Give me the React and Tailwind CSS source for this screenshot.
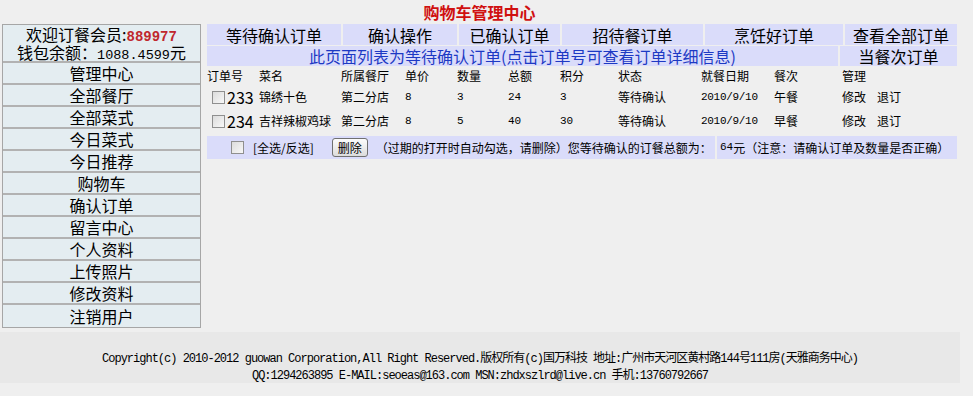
import React from 'react';

const navItems = [
  '管理中心', '全部餐厅', '全部菜式', '今日菜式', '今日推荐', '购物车',
  '确认订单', '留言中心', '个人资料', '上传照片', '修改资料', '注销用户',
];

const tabs = [
  { label: '等待确认订单', w: 'w-[134px]' },
  { label: '确认操作', w: 'w-[114px]' },
  { label: '已确认订单', w: 'w-[101px]' },
  { label: '招待餐订单', w: 'w-[141px]' },
  { label: '烹饪好订单', w: 'w-[138px]' },
  { label: '查看全部订单', w: 'flex-1' },
];

const orders = [
  { id: '233', name: '锦绣十色', shop: '第二分店', price: '8', qty: '3', total: '24', score: '3', meal: '午餐' },
  { id: '234', name: '吉祥辣椒鸡球', shop: '第二分店', price: '8', qty: '5', total: '40', score: '30', meal: '早餐' },
];

const Box = () => (
  <span className="inline-block shrink-0 w-[13px] h-[13px] border border-[#8f8f8f] bg-gradient-to-br from-[#dcdcdc] to-[#f8f8f8] align-middle" />
);

const cols = ['w-[52px]', 'w-[82px]', 'w-[64px]', 'w-[52px]', 'w-[51px]', 'w-[52px]', 'w-[58px]', 'w-[83px]', 'w-[73px]', 'w-[68px]'];

export default function App() {
  return (
    <div className="min-h-[396px] w-[973px] bg-[#efefef] font-['Noto_Sans_CJK_SC',sans-serif] text-black [text-spacing-trim:space-all]">
      <div className="w-[955px] ml-[2px]">
        <div className="h-[24px] flex items-center justify-center text-[16px] font-bold text-[#d01010]">
          购物车管理中心
        </div>
        <div className="flex gap-[6px]">
          {/* left menu */}
          <div className="w-[199px] border border-[#a6a6a6] bg-[#e4edf1]">
            <div className="h-[38px] border-b-2 border-[#b2b2b2] flex flex-col items-center justify-center text-[16px]">
              <div className="h-[18px] leading-[18px]">欢迎订餐会员:<span className="font-['Liberation_Mono',monospace] text-[14px] font-bold text-[#c0272d]">889977</span></div>
              <div className="h-[18px] leading-[18px]">钱包余额：<span className="font-['Liberation_Mono',monospace] text-[13.5px]">1088.4599</span>元</div>
            </div>
            {navItems.map((item, i) => (
              <div
                key={item}
                className={`h-[22px] flex items-center justify-center text-[16px] leading-none ${i < navItems.length - 1 ? 'border-b-2 border-[#b2b2b2]' : ''}`}
              >
                {item}
              </div>
            ))}
          </div>

          {/* right content */}
          <div className="w-[750px]">
            <div className="flex gap-[2px] h-[21px]">
              {tabs.map((t) => (
                <div key={t.label} className={`${t.w} bg-[#dadcfa] flex items-center justify-center text-[16px] leading-none`}>
                  {t.label}
                </div>
              ))}
            </div>
            <div className="flex gap-[2px] h-[20px] mt-[1px]">
              <div className="flex-1 bg-[#dadcfa] flex items-center justify-center text-[16px] leading-none text-[#1d39c4]">
                此页面列表为等待确认订单(点击订单号可查看订单详细信息)
              </div>
              <div className="w-[117px] bg-[#dadcfa] flex items-center justify-center text-[16px] leading-none">
                当餐次订单
              </div>
            </div>

            <div className="text-[12px]">
              <div className="flex h-[19px] items-center">
                {['订单号', '菜名', '所属餐厅', '单价', '数量', '总额', '积分', '状态', '就餐日期', '餐次', '管理'].map((h, i) => (
                  <div key={h} className={cols[i] ?? 'flex-1'}>{h}</div>
                ))}
              </div>
              {orders.map((o) => (
                <div key={o.id} className="flex h-[24px] items-center">
                  <div className={`${cols[0]} flex items-center pl-[5px] gap-[2px]`}>
                    <Box />
                    <span className="text-[16px] leading-none">{o.id}</span>
                  </div>
                  <div className={cols[1]}>{o.name}</div>
                  <div className={cols[2]}>{o.shop}</div>
                  <div className={`${cols[3]} font-['Liberation_Mono',monospace] text-[11px]`}>{o.price}</div>
                  <div className={`${cols[4]} font-['Liberation_Mono',monospace] text-[11px]`}>{o.qty}</div>
                  <div className={`${cols[5]} font-['Liberation_Mono',monospace] text-[11px]`}>{o.total}</div>
                  <div className={`${cols[6]} font-['Liberation_Mono',monospace] text-[11px]`}>{o.score}</div>
                  <div className={cols[7]}>等待确认</div>
                  <div className={`${cols[8]} font-['Liberation_Mono',monospace] text-[11px] tracking-[-0.3px]`}>2010/9/10</div>
                  <div className={cols[9]}>{o.meal}</div>
                  <div className="flex-1 flex gap-[11px]"><span>修改</span><span>退订</span></div>
                </div>
              ))}

              <div className="flex h-[23px] mt-[3px] gap-[2px]">
                <div className="w-[508px] bg-[#dadcfa] flex items-center pl-[24px] whitespace-nowrap">
                  <Box />
                  <span className="ml-[9px]">[全选/反选]</span>
                  <span className="ml-[18px] px-[5px] h-[19px] flex items-center border border-[#707070] rounded-[3px] bg-gradient-to-b from-[#fcfcfc] to-[#dcdcdc]">删除</span>
                  <span className="ml-[8px]">（过期的打开时自动勾选，请删除）您等待确认的订餐总额为：</span>
                </div>
                <div className="flex-1 bg-[#dadcfa] flex items-center pl-[3px] whitespace-nowrap">
                  <span className="font-['Liberation_Mono',monospace] text-[11px]">64</span>元（注意：请确认订单及数量是否正确）
                </div>
              </div>
            </div>
          </div>
        </div>
      </div>

      <div className="mt-[4px] w-[960px] h-[51px] bg-[#e8e8e8] flex flex-col items-center pt-[19px] text-[12px] leading-[17px] font-['Liberation_Mono','Noto_Sans_CJK_SC',monospace]">
        <div className="tracking-[-1px]">Copyright(c) 2010-2012 guowan Corporation,All Right Reserved.版权所有(c)国万科技 地址:广州市天河区黄村路144号111房(天雅商务中心)</div>
        <div className="tracking-[-1px]">QQ:1294263895 E-MAIL:seoeas@163.com MSN:zhdxszlrd@live.cn 手机:13760792667</div>
      </div>
    </div>
  );
}
